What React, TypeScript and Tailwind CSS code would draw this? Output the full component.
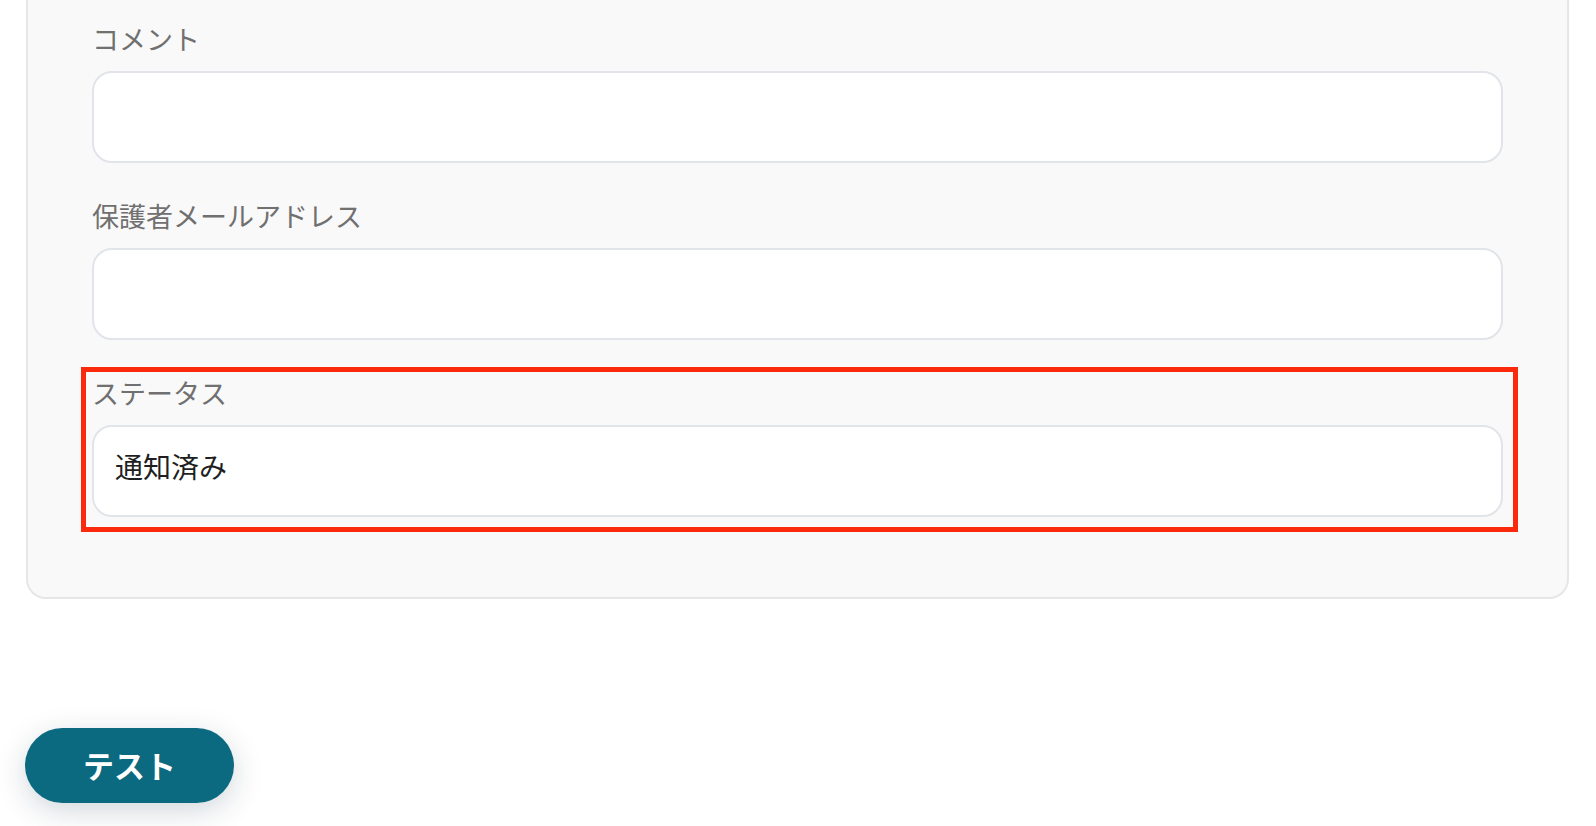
import React from "react";

const font = { fontFamily: '"Noto Sans CJK JP", "Noto Sans", sans-serif' };

function Field({ label, value, highlight }: { label: string; value?: string; highlight?: boolean }) {
  return (
    <div className="relative flex flex-col">
      {highlight && (
        <div className="pointer-events-none absolute left-[-11px] right-[-15px] top-[-8px] bottom-[-15px] border-[5px] border-[#fb2a0c]" />
      )}
      <div className="h-[36px] text-[27px] leading-[36px] text-[#707070]">{label}</div>
      <div className="mt-[14px] flex h-[92px] items-center rounded-[20px] border-2 border-[#e1e4e8] bg-white px-[21px] pb-[10px] text-[28px] text-[#1f1f1f]">
        {value}
      </div>
    </div>
  );
}

export default function App() {
  return (
    <div className="min-h-[826px] w-[1596px] overflow-hidden bg-white" style={font}>
      <div className="ml-[26px] w-[1543px] rounded-b-[20px] border-2 border-t-0 border-[#e6e6e6] bg-[#f9f9f9] px-[64px] pt-[21px] pb-[80px]">
        <div className="flex flex-col gap-[35px]">
          <Field label="コメント" />
          <Field label="保護者メールアドレス" />
          <Field label="ステータス" value="通知済み" highlight />
        </div>
      </div>
      <div className="mt-[129px] ml-[25px]">
        <button className="flex h-[75px] w-[209px] items-center justify-center rounded-full bg-[#0c6a80] text-[31px] font-bold text-white shadow-[0_8px_30px_rgba(0,40,60,0.18)]">
          テスト
        </button>
      </div>
    </div>
  );
}
